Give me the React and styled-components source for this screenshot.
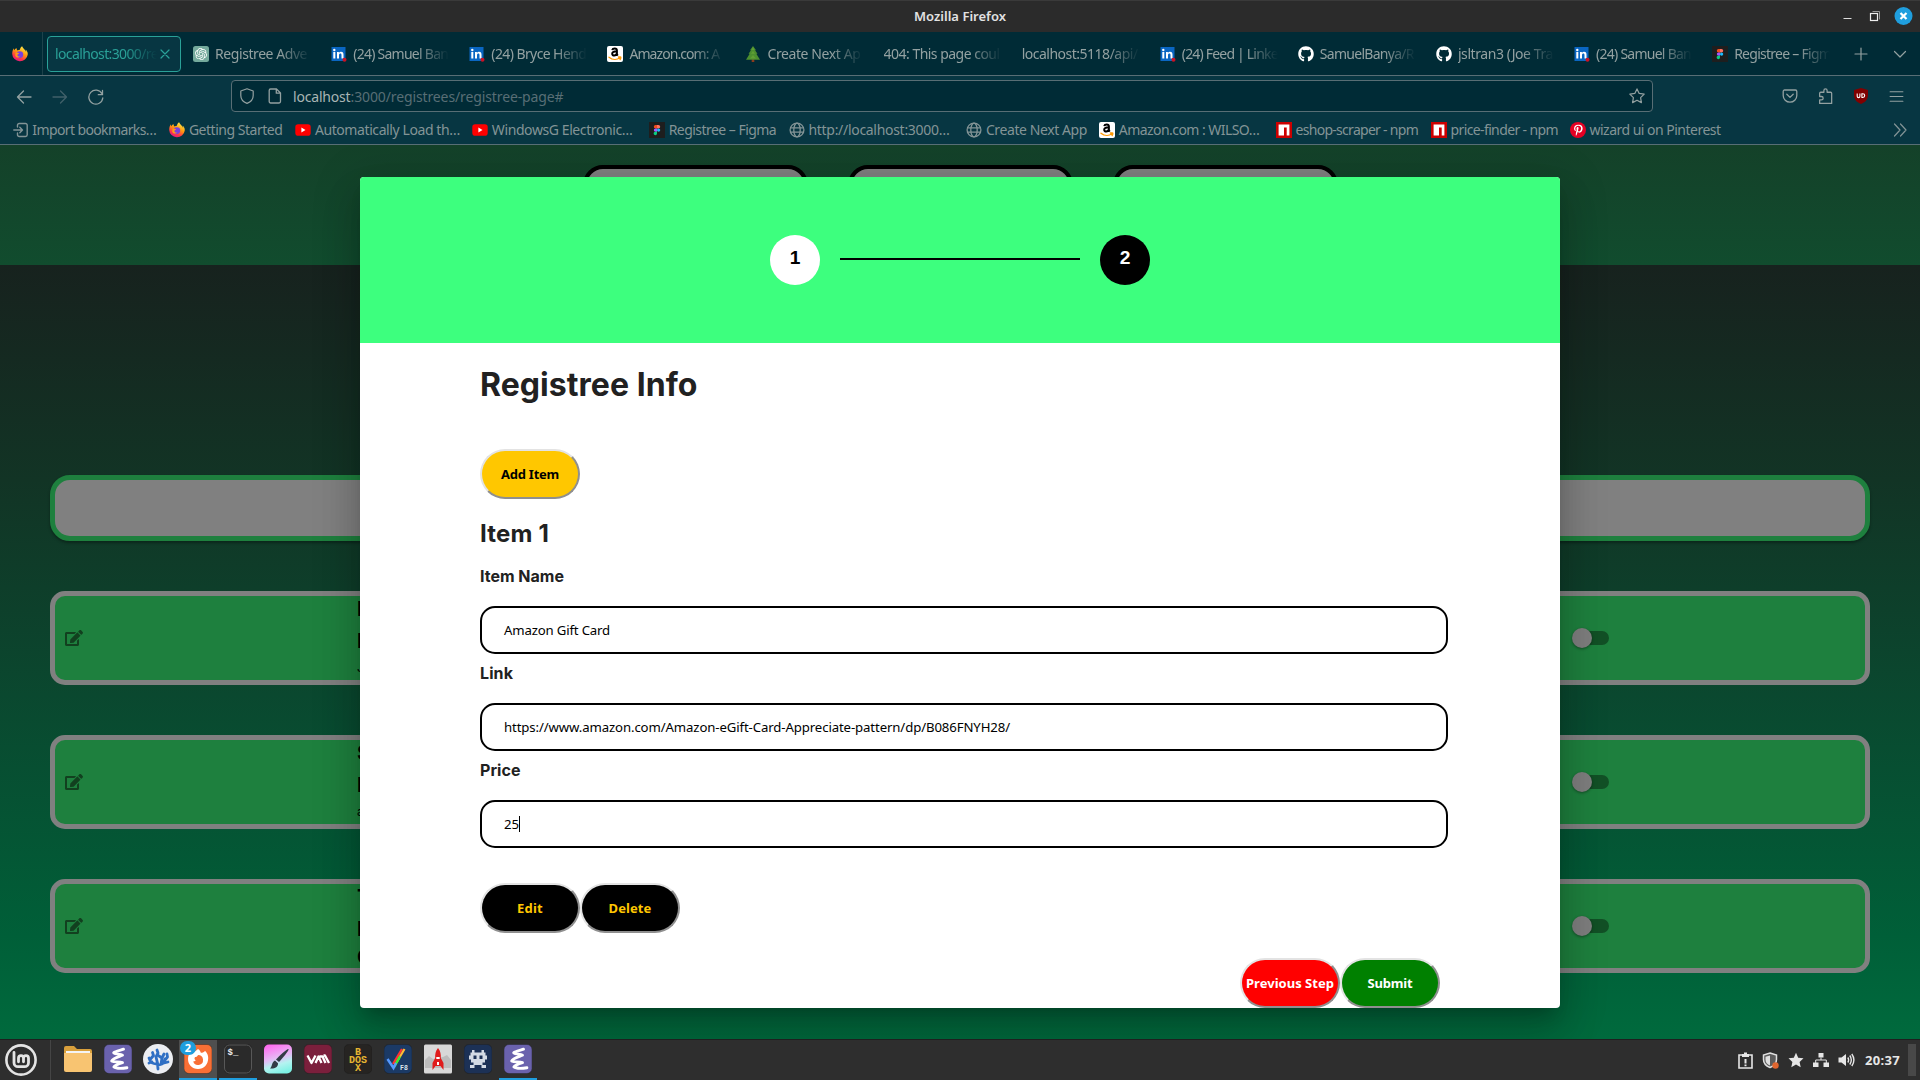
import React, { useLayoutEffect, useRef, useState } from "react";
import styled, { createGlobalStyle, css } from "styled-components";
import { FaEdit, FaGithub, FaPinterestP } from "react-icons/fa";
import { SiOpenai } from "react-icons/si";

const GlobalStyle = createGlobalStyle`
  * { box-sizing: border-box; }
  html, body { margin: 0; padding: 0; background: #002b36; overflow: hidden; }
  svg { display: block; flex: none; }
`;

const ui = `"Noto Sans", "Open Sans", sans-serif`;
const inter = `Inter, "Liberation Sans", sans-serif`;

const Desktop = styled.div`
  width: 1920px;
  height: 1080px;
  display: grid;
  grid-template-columns: 1920px;
  grid-template-rows: 32px 44px 42px 27px 894px 41px;
  overflow: hidden;
  font-family: ${ui};
  font-size: 14px;
  color: #93a1a1;
`;

/* ---------- text that keeps a given advance width ---------- */
const FitSpan = styled.span`
  display: block;
  flex: none;
  white-space: pre;
`;

function Fit({ w, children, className }) {
  const ref = useRef(null);
  const [spacing, setSpacing] = useState(0);
  useLayoutEffect(() => {
    const range = document.createRange();
    range.selectNodeContents(ref.current);
    const natural = range.getBoundingClientRect().width;
    setSpacing((w - natural) / String(children).length);
  }, [w, children]);
  return (
    <FitSpan ref={ref} className={className} style={{ letterSpacing: spacing, width: w }}>
      {children}
    </FitSpan>
  );
}

/* ---------- title bar ---------- */
const TitleBar = styled.header`
  display: grid;
  grid-template-columns: 1fr auto 1fr;
  align-items: center;
  background: #2b2b2b;
  border-top: 1px solid #3a3a3a;
  color: #e2e2e2;
  font-size: 13px;
  font-weight: 600;
  padding-bottom: 1px;
`;
const WindowButtons = styled.div`
  grid-column: 3;
  display: flex;
  justify-content: flex-end;
  align-items: center;
  padding-right: 7px;
`;
const TitleText = styled.div`
  grid-column: 2;
`;

/* ---------- tab strip ---------- */
const TabStrip = styled.nav`
  display: flex;
  align-items: center;
  background: #002b36;
  border-bottom: 1px solid #586e75;
`;
const PinnedTab = styled.div`
  width: 43px;
  height: 43px;
  padding-left: 12px;
  display: flex;
  align-items: center;
  border-right: 1px solid #1d424b;
  margin-right: 4px;
  flex: none;
`;
const Tab = styled.div`
  width: 134px;
  height: 36px;
  margin-right: 4.1px;
  padding: 0 7px;
  display: flex;
  align-items: center;
  gap: 6px;
  border: 1px solid transparent;
  border-radius: 4px;
  flex: none;
  ${(p) =>
    p.$active &&
    css`
      background: #073642;
      border-color: #2aa198;
      color: #2aa198;
      gap: 0;
    `}
`;
const TabLabel = styled.div`
  flex: 1;
  min-width: 0;
  mask-image: linear-gradient(to left, transparent, #000 32px);
`;
const StripButton = styled.div`
  width: ${(p) => p.$w}px;
  display: flex;
  justify-content: center;
`;

/* ---------- navigation bar ---------- */
const NavBar = styled.div`
  display: flex;
  align-items: center;
  background: #073642;
`;
const NavGroup = styled.div`
  width: 231px;
  display: flex;
  gap: 20px;
  padding-left: 16px;
`;
const UrlBar = styled.div`
  width: 1422px;
  height: 32px;
  margin-bottom: 2px;
  display: flex;
  align-items: center;
  background: #002b36;
  border: 1px solid #586e75;
  border-radius: 4px;
  padding: 0 7px;
  gap: 12px;
`;
const UrlText = styled.div`
  display: flex;
  flex: 1;
  margin-left: -2px;
`;
const Host = styled(Fit)`
  color: #a9b5b4;
`;
const Path = styled(Fit)`
  color: #586e75;
`;
const NavTools = styled.div`
  flex: 1;
  display: flex;
  align-items: center;
  justify-content: flex-end;
  gap: 18.8px;
  padding-right: 15.5px;
  padding-bottom: 2px;
`;

/* ---------- bookmarks ---------- */
const BookmarkBar = styled.div`
  display: flex;
  align-items: center;
  background: #073642;
  border-bottom: 1px solid #586e75;
  padding: 0 12px 3px 12.5px;
  color: #839496;
`;
const Bookmark = styled.div`
  display: flex;
  align-items: center;
  gap: 3.8px;
  margin-right: ${(p) => p.$gap}px;
`;
const BookmarkMore = styled.div`
  margin-left: auto;
`;

/* ---------- page behind the dialog ---------- */
const Page = styled.main`
  position: relative;
  overflow: hidden;
  background: linear-gradient(#17221e 120px, #123425 335px, #0a482f 550px, #005f38 790px, #006a3d 894px);
`;
const Hero = styled.section`
  height: 120px;
  padding-top: 20px;
  display: flex;
  justify-content: center;
  gap: 40px;
  overflow: hidden;
  background: linear-gradient(#144129, #114c2e);
`;
const HeroCard = styled.div`
  width: 225px;
  height: 90px;
  border: 4px solid #000;
  border-radius: 20px;
  background: #808080;
`;
const List = styled.section`
  display: flex;
  flex-direction: column;
  padding: 210px 50px 0;
`;
const SearchBox = styled.div`
  height: 66px;
  border: 5px solid #1e803e;
  border-radius: 20px;
  background: #808080;
  box-shadow: 0 2px 3px rgba(0, 0, 0, 0.35);
  margin-bottom: 50px;
`;
const Row = styled.div`
  height: 94px;
  margin-bottom: 50px;
  border: 5px solid #808080;
  border-radius: 15px;
  background: #1e803e;
  display: grid;
  grid-template-columns: 302px 1218px 1fr;
  grid-template-rows: 84px;
  align-items: center;
  color: #12401f;
`;
const RowIcon = styled.div`
  padding-left: 10px;
`;
const RowInfo = styled.div`
  align-self: start;
  display: flex;
  flex-direction: column;
  color: #000;
  font: 700 20px/32px ${inter};
  margin-top: -3px;
`;
const RowNote = styled.span`
  font: ${(p) => (p.$bold ? "700 20px/24px" : "400 12px/22px")} ${inter};
`;
const Track = styled.div`
  width: 34px;
  height: 14px;
  border-radius: 7px;
  background: #125026;
  display: flex;
  align-items: center;
`;
const Thumb = styled.div`
  width: 20px;
  height: 20px;
  margin-left: -3px;
  border-radius: 50%;
  background: #7e7e7e;
  flex: none;
  box-shadow: 0 1px 3px rgba(0, 0, 0, 0.4);
`;

/* ---------- dialog ---------- */
const Dialog = styled.section`
  position: absolute;
  left: 360px;
  top: 32px;
  width: 1200px;
  height: 831px;
  border-radius: 4px;
  overflow: hidden;
  background: #fff;
  box-shadow: 0 11px 15px -7px rgba(0, 0, 0, 0.2), 0 24px 38px 3px rgba(0, 0, 0, 0.14), 0 9px 46px 8px rgba(0, 0, 0, 0.12);
  color: #212121;
  font-family: ${inter};
`;
const Stepper = styled.div`
  height: 166px;
  background: #3dff7e;
  display: flex;
  align-items: center;
  justify-content: center;
  gap: 20px;
`;
const Step = styled.div`
  width: 50px;
  height: 50px;
  border-radius: 50%;
  background: ${(p) => (p.$dark ? "#000" : "#fff")};
  color: ${(p) => (p.$dark ? "#fff" : "#000")};
  font: 700 19.2px/46px "Liberation Sans", Arial, sans-serif;
  text-align: center;
`;
const StepLine = styled.div`
  width: 240px;
  height: 2px;
  margin-bottom: 2px;
  background: #000;
`;
const Form = styled.div`
  width: 960px;
  margin: 0 auto;
`;
const Title = styled(Fit)`
  font-weight: 700;
  font-size: 32px;
  line-height: 40px;
  padding-top: 22px;
  height: 106px;
`;
const ItemTitle = styled(Fit)`
  font-weight: 700;
  font-size: 24px;
  line-height: 30px;
  margin-top: 20px;
`;
const Label = styled(Fit)`
  font-weight: 700;
  font-size: 16px;
  line-height: 20px;
  margin: ${(p) => p.$top || 9}px 0 20px;
`;
const ItemLabel = styled(Label)`
  margin-top: 17px;
`;
const Field = styled.div`
  width: 968px;
  height: 48px;
  border: 2px solid #000;
  border-radius: 15px;
  padding-left: 22px;
  margin-bottom: 9px;
  display: flex;
  align-items: center;
  font: 400 13.2px ${ui};
  color: #000;
`;
const Caret = styled.span`
  width: 1px;
  height: 16px;
  background: #000;
`;
const Button = styled.button`
  width: 100px;
  height: 50px;
  padding: 0;
  border: 2px solid;
  border-color: #e3e3e3 #8f8f8f #8f8f8f #e3e3e3;
  border-radius: 25px;
  background: ${(p) => p.$bg};
  color: ${(p) => p.$fg};
  font: 700 13px ${ui};
  display: flex;
  align-items: center;
  justify-content: center;
`;
const ButtonRow = styled.div`
  display: flex;
  margin-top: ${(p) => p.$top}px;
  justify-content: ${(p) => (p.$end ? "flex-end" : "flex-start")};
`;

/* ---------- taskbar ---------- */
const Taskbar = styled.footer`
  display: flex;
  align-items: stretch;
  background: #2e2e2e;
  border-top: 1px solid #1f1f1f;
`;
const MenuButton = styled.div`
  width: 51px;
  padding-left: 4px;
  display: flex;
  align-items: center;
  border-right: 1px solid #454545;
  margin-right: 8px;
`;
const Task = styled.div`
  position: relative;
  width: 38px;
  margin-right: 2px;
  display: flex;
  align-items: center;
  justify-content: center;
  background: ${(p) => (p.$active ? "#4f4f4f" : "transparent")};
  border-bottom: 2px solid ${(p) => (p.$open ? "#1f9ede" : "transparent")};
`;
const Badge = styled.span`
  position: absolute;
  left: 1px;
  top: 1px;
  width: 16px;
  height: 14px;
  border-radius: 7px;
  background: #1f9ede;
  color: #fff;
  font: 700 11px/14px ${ui};
  text-align: center;
`;
const Tray = styled.div`
  margin-left: auto;
  display: flex;
  align-items: center;
  gap: 9px;
  padding-right: 4px;
  color: #e6e6e6;
`;
const Clock = styled.div`
  font: 700 13px ${ui};
  color: #e6e6e6;
  margin-left: 1px;
`;
const ShowDesktop = styled.div`
  width: 8px;
  height: 32px;
  background: #484848;
  margin-left: -1px;
`;

/* ---------- icons ---------- */
const line = { fill: "none", stroke: "currentColor", strokeWidth: 1.3, strokeLinecap: "round", strokeLinejoin: "round" };

const FirefoxIcon = () => (
  <svg width="16" height="16" viewBox="0 0 16 16">
    <defs>
      <linearGradient id="ffx" x1="0.8" y1="0" x2="0.3" y2="1">
        <stop offset="0" stopColor="#fff44f" />
        <stop offset="0.45" stopColor="#ff980e" />
        <stop offset="0.75" stopColor="#ff3647" />
        <stop offset="1" stopColor="#e31587" />
      </linearGradient>
    </defs>
    <path fill="url(#ffx)" d="M15.5 6.2c-.4-1-1.200-2.100-1.900-2.400.4.9.6 1.600.6 2.100C13 3.600 11 2.600 10.100.3 8.600 1.200 8 2.800 7.900 3.800c-.9 0-1.700.3-2.300.7C4.500 3.600 4.500 2.500 4.600 2.100 3.500 2.600 2.700 3.500 2.200 4.200 1.900 3.800 1.900 2.600 1.900 2.300 1 3.100.2 5.500.2 8a7.800 7.800 0 0 0 15.500.7c.1-.9.100-1.700-.2-2.500z" />
    <circle cx="7.800" cy="8.600" r="3.400" fill="#7a3fe0" />
    <path fill="#ff9a1a" d="M3.600 6.700c1.300-.5 2.600 0 3.500.9-.6.9-1.700.5-1.700 1.500 0 1.300 1.600 1.900 3 1.500-1.200 1.600-4.500 1.300-5.200-1.200z" />
  </svg>
);
const ChatIcon = () => (
  <svg width="16" height="16" viewBox="0 0 16 16">
    <rect width="16" height="16" rx="2.500" fill="#74aa9c" />
    <g transform="translate(2 2)" color="#fff"><SiOpenai size={12} /></g>
  </svg>
);
const LinkedInIcon = () => (
  <svg width="16" height="16" viewBox="0 0 16 16">
    <rect x="0.500" y="1" width="14" height="14" fill="#0a66c2" />
    <g fill="#fff"><rect x="2.300" y="6" width="2" height="6.500" /><circle cx="3.300" cy="4" r="1.200" />
      <path d="M6 6h1.900v.9c.4-.7 1.100-1.100 2.100-1.100 1.900 0 2.500 1.200 2.500 3v3.700h-2V9.200c0-1-.2-1.700-1.100-1.700s-1.400.7-1.400 1.700v3.300H6z" /></g>
    <circle cx="13.500" cy="13.700" r="2" fill="#cb1124" />
  </svg>
);
const AmazonIcon = () => (
  <svg width="16" height="16" viewBox="0 0 16 16">
    <rect width="16" height="16" rx="2" fill="#fff" />
    <path fill="none" stroke="#000" strokeWidth="2" d="M5.200 4.100c.3-1.300 1.100-1.700 2.500-1.700 1.600 0 2.200.7 2.200 2v3.300c0 .9.300 1.300.9 1.900M9.900 5.300c-2.900 0-4.700.6-4.700 2.500 0 2.400 3.900 2.100 4.700-.6" />
    <path fill="none" stroke="#f90" strokeWidth="1.400" strokeLinecap="round" d="M2 11.200c3.500 2.800 8 2.800 11 .6M11.600 11c1.300-.4 2.300 0 2.200.3.100.6-.2 1.500-.7 2.200" />
  </svg>
);
const TreeIcon = () => (
  <svg width="16" height="16" viewBox="0 0 16 16">
    <rect x="6.700" y="12.500" width="2.600" height="3.500" fill="#8a3b1d" />
    <path fill="#4c8f2f" d="M8 0l3 4.200h-1l2.500 3.600h-1.200L15 13.700H1l3.700-5.900H3.500L6 4.200H5z" />
    <path fill="#75b23c" d="M8 1l1.500 3h-3zM8 5l2 2.800H6zM8 9l3 3.500H5z" opacity=".5" />
  </svg>
);
const GithubIcon = () => <FaGithub size={16} color="#fff" />;
const FigmaIcon = () => (
  <svg width="16" height="16" viewBox="0 0 16 16">
    <rect width="16" height="16" fill="#1e1e1e" />
    <path fill="#f24e1e" d="M8 3H6.500a1.700 1.700 0 0 0 0 3.400H8z" />
    <path fill="#ff7262" d="M8 3h1.500a1.700 1.700 0 0 1 0 3.400H8z" />
    <path fill="#a259ff" d="M8 6.400H6.500a1.700 1.700 0 0 0 0 3.400H8z" />
    <circle cx="9.600" cy="8.100" r="1.650" fill="#1abcfe" />
    <path fill="#0acf83" d="M8 9.800H6.500A1.700 1.700 0 1 0 8 11.500z" />
  </svg>
);
const YoutubeIcon = () => (
  <svg width="16" height="16" viewBox="0 0 16 16">
    <rect x="0.300" y="2.300" width="15.400" height="11.400" rx="2.800" fill="#f00" />
    <path fill="#fff" d="M6.400 5.600v4.800L10.500 8z" />
  </svg>
);
const GlobeIcon = () => (
  <svg width="16" height="16" viewBox="0 0 16 16" {...line}>
    <circle cx="8" cy="8" r="6.900" /><ellipse cx="8" cy="8" rx="3.200" ry="6.900" /><path d="M1.500 5.800h13M1.500 10.200h13" />
  </svg>
);
const NpmIcon = () => (
  <svg width="16" height="16" viewBox="0 0 16 16">
    <rect width="16" height="16" fill="#c00" /><path fill="#fff" d="M2.600 2.600h10.800v10.800h-2.700V5.400H8v8H2.600z" />
  </svg>
);
const PinterestIcon = () => (
  <svg width="16" height="16" viewBox="0 0 16 16">
    <circle cx="8" cy="8" r="8" fill="#e60023" /><g transform="translate(2.600 2.400)"><FaPinterestP size={11.500} color="#fff" /></g>
  </svg>
);
const ImportIcon = () => (
  <svg width="16" height="16" viewBox="0 0 16 16" {...line} strokeWidth="1.400">
    <path d="M4.500 5V3.200A1.700 1.700 0 0 1 6.200 1.500h6.300a1.700 1.700 0 0 1 1.700 1.700v9.600a1.700 1.700 0 0 1-1.700 1.700H6.200a1.700 1.700 0 0 1-1.700-1.700V11M.8 8h8.500M6.800 5.300L9.500 8l-2.700 2.700" />
  </svg>
);
const Glyph = ({ d, size = 16, w = 1.3, color }) => (
  <svg width={size} height={size} viewBox="0 0 16 16" {...line} strokeWidth={w} color={color}>
    <path d={d} />
  </svg>
);

/* ---------- taskbar drawings ---------- */
const Tile = ({ fill, children }) => (
  <svg width="28" height="30" viewBox="0 0 28 30">
    <rect x="0" y="0.500" width="28" height="29" rx="5" fill={fill} stroke="#1c1c1c" strokeOpacity=".4" />
    {children}
  </svg>
);
const MintIcon = () => (
  <svg width="34" height="34" viewBox="0 0 34 34" fill="none" stroke="#e4e4e4">
    <circle cx="17" cy="17" r="14.600" strokeWidth="2.600" />
    <path strokeWidth="2.800" strokeLinecap="round" d="M10 9.500v10.200a4 4 0 0 0 4 4h6.500a4 4 0 0 0 4-4v-4.500a2.500 2.500 0 0 0-5 0v3.600M19.500 18.800v-3.600a2.500 2.500 0 0 0-5 0v3.600" />
  </svg>
);
const FolderIcon = () => (
  <svg width="28" height="28" viewBox="0 0 28 28">
    <path fill="#d9a03c" d="M0 3a2 2 0 0 1 2-2h8l3 3h13a2 2 0 0 1 2 2v5H0z" />
    <rect x="2" y="6" width="24" height="6" fill="#f4f4f4" />
    <path fill="#f8c471" d="M0 8h28v17a2 2 0 0 1-2 2H2a2 2 0 0 1-2-2z" />
  </svg>
);
const EmacsIcon = () => (
  <Tile fill="#6a62ad">
    <path fill="none" stroke="#fff" strokeWidth="2.900" strokeLinecap="round" strokeLinejoin="round" d="M19.500 5.200c-3.500 1.300-8 1.800-9.800 3.600 2 1.700 6.500 1 8.800 2.400-4 1.500-10 3-10.800 5.800 2.500 1.500 7.500.3 10.800 1.600-3.500 1-7.500 2.200-8.600 4.300 2.500 2.100 8 1.600 13 .9" />
  </Tile>
);
const CoralIcon = () => (
  <svg width="30" height="32" viewBox="0 0 30 32">
    <circle cx="15" cy="16" r="15" fill="#eceef2" />
    <g fill="none" stroke="#2f6fc4" strokeWidth="2.800" strokeLinecap="round" strokeLinejoin="round">
      <path d="M15 26c0-5-1-9-2-12M14 21c-4 0-7-2-8-6M9 19l-3 1M7.500 16l3-3.500-1-3M13 14l2-4-1-3M15 22c4 0 6-2 7-6M18 21l1-6 2-4M22 17l2.500-3-.5-3M19 15l-3-2M21 20l4-1" />
    </g>
  </svg>
);
const FirefoxTask = () => (
  <Tile fill="#f96f35">
    <path fill="#fff" d="M14 5c1.700 1 2.500 2.300 2.800 3.800 2 0 3.400-.6 4.200-2 2.300 2.500 3.200 4.700 3.200 7.200C24.200 20.500 20 25 14 25S4 20.500 4 15c0-3 1-5.500 3-7 .2 1.200.7 1.800 1.500 2.200C9.500 7.500 11.500 7.500 14 5z" />
    <path fill="#f96f35" d="M14 11a5 5 0 1 1-4.800 6.300c1 .3 2-.2 2.500-1-1.500-.8-1.500-2.300-.5-3.300.9.200 2-.3 2.800-2z" />
  </Tile>
);
const TerminalIcon = () => (
  <Tile fill="#2a2a2a">
    <rect x="0.500" y="1" width="27" height="28" rx="5" fill="none" stroke="#585858" />
    <text x="3.500" y="11" fontFamily="Liberation Mono, monospace" fontWeight="700" fontSize="9" fill="#eee">$_</text>
  </Tile>
);
const KritaIcon = () => (
  <svg width="28" height="30" viewBox="0 0 28 30">
    <defs><linearGradient id="kr" x1="0.300" y1="0" x2="0.600" y2="1"><stop offset="0" stopColor="#ff6cf0" /><stop offset=".45" stopColor="#e6b8f5" /><stop offset=".7" stopColor="#b4f3f0" /><stop offset="1" stopColor="#7df2e4" /></linearGradient></defs>
    <rect y="0.500" width="28" height="29" rx="5" fill="url(#kr)" />
    <path fill="#333b46" d="M24.500 5c1 .8-6 9.500-9.500 13l-3-2.500C15 12 23.500 4.200 24.500 5zM11 16.500l3 2.700c.3 4-3.500 5.800-8 5.300 2.300-1.500 1.500-6.500 5-8z" />
  </svg>
);
const VmIcon = () => (
  <Tile fill="#7b1f3c"><path fill="none" stroke="#fff" strokeWidth="2.300" strokeLinejoin="round" d="M3.500 11.500l4 7.500 4-7.500M11.500 19l3-6.500L17.500 19M15.500 12.500h3L21.500 19M19.500 11.500h1.500l4 7.500" /></Tile>
);
const DosIcon = () => (
  <Tile fill="#262422">
    <g fontFamily="Liberation Mono, monospace" fontWeight="700" fontSize="10" fill="#e6b631" textAnchor="middle">
      <text x="14" y="10.500">B</text><text x="14" y="18.500">DOS</text><text x="14" y="26.500">X</text>
    </g>
  </Tile>
);
const F8Icon = () => (
  <Tile fill="#1b3a66">
    <path stroke="#f33" strokeWidth="2.200" fill="none" d="M9 20L18 5" /><path stroke="#fb3" strokeWidth="2.200" fill="none" d="M11 21L20.500 5" />
    <path stroke="#3e3" strokeWidth="2.200" fill="none" d="M10 23.500L16 12.500" /><path stroke="#59f" strokeWidth="2.500" fill="none" d="M3.500 15l6 9L12 19" />
    <text x="16" y="26" fontFamily="Liberation Mono, monospace" fontWeight="700" fontSize="6.500" fill="#dfe6ee">F8</text>
  </Tile>
);
const RocketIcon = () => (
  <svg width="28" height="30" viewBox="0 0 28 30">
    <rect y="0.500" width="28" height="29" rx="1.500" fill="#d8d8d8" />
    <path fill="#bcbcbc" d="M1 16l4-4 4 3 10-2 4-2 4 5v8H1z" />
    <path fill="#e01b1b" d="M14 4c2.500 3 3 6 2.800 10l2.700 5v7l-3-4h-5l-3 4v-7l2.700-5C11 10 11.500 7 14 4z" />
    <path fill="#fff" d="M12.300 13h3.400v2h-3.400zM13 18h2v3h-2z" />
  </svg>
);
const InvaderIcon = () => (
  <Tile fill="#1c3156"><path fill="#d3dae4" d="M8 6h2.500v2.500h7V6H20v2.500h1.500v3H23v4h-2v3h-2.500v2.500H22V24h-4.500v-3h-7v3H6v-3h3.500v-2.500H7v-3H5v-4h1.500v-3H8zM9.500 11.500V15h3v-3.500zM15.500 11.500V15h3v-3.500z" fillRule="evenodd" /></Tile>
);

/* ---------- data ---------- */
const tabs = [
  { icon: ChatIcon, text: "Registree Adve", w: 92 },
  { icon: LinkedInIcon, text: "(24) Samuel Ban", w: 95 },
  { icon: LinkedInIcon, text: "(24) Bryce Hend", w: 95 },
  { icon: AmazonIcon, text: "Amazon.com: A", w: 90 },
  { icon: TreeIcon, text: "Create Next Ap", w: 93 },
  { text: "404: This page coul", w: 116 },
  { text: "localhost:5118/api/", w: 116 },
  { icon: LinkedInIcon, text: "(24) Feed | Linke", w: 96 },
  { icon: GithubIcon, text: "SamuelBanya/R", w: 94 },
  { icon: GithubIcon, text: "jsltran3 (Joe Tra", w: 95 },
  { icon: LinkedInIcon, text: "(24) Samuel Ban", w: 95 },
  { icon: FigmaIcon, text: "Registree – Figm", w: 97 },
];
const bookmarks = [
  { icon: ImportIcon, text: "Import bookmarks…", w: 124, gap: 12.8 },
  { icon: FirefoxIcon, text: "Getting Started", w: 93.5, gap: 12.7 },
  { icon: YoutubeIcon, text: "Automatically Load th…", w: 145, gap: 12.2 },
  { icon: YoutubeIcon, text: "WindowsG Electronic…", w: 140.5, gap: 16.5 },
  { icon: FigmaIcon, text: "Registree – Figma", w: 107.5, gap: 12.5 },
  { icon: GlobeIcon, text: "http://localhost:3000…", w: 141, gap: 16.7 },
  { icon: GlobeIcon, text: "Create Next App", w: 101, gap: 12 },
  { icon: AmazonIcon, text: "Amazon.com : WILSO…", w: 140.5, gap: 16.5 },
  { icon: NpmIcon, text: "eshop-scraper - npm", w: 122.5, gap: 12.7 },
  { icon: NpmIcon, text: "price-finder - npm", w: 107.5, gap: 11.7 },
  { icon: PinterestIcon, text: "wizard ui on Pinterest", w: 131, gap: 0 },
];
const rows = [
  { lines: ["D", "L"], note: "J" },
  { lines: ["S", "L"], note: "a" },
  { lines: ["T", "L"], note: "C", bold: true },
];
const tasks = [
  { icon: FolderIcon }, { icon: EmacsIcon }, { icon: CoralIcon },
  { icon: FirefoxTask, active: true, open: true, badge: "2" },
  { icon: TerminalIcon, open: true }, { icon: KritaIcon }, { icon: VmIcon }, { icon: DosIcon },
  { icon: F8Icon }, { icon: RocketIcon }, { icon: InvaderIcon }, { icon: EmacsIcon, open: true },
];

export default function App() {
  return (
    <>
      <GlobalStyle />
      <Desktop>
        <TitleBar>
          <TitleText><Fit w={92}>Mozilla Firefox</Fit></TitleText>
          <WindowButtons>
            <svg width="70" height="20" viewBox="0 0 70 20">
              <path d="M0.500 12.500h8" stroke="#ddd" strokeWidth="1" fill="none" />
              <path d="M29.500 5.500h7v8" stroke="#999" fill="none" />
              <rect x="27.500" y="7.500" width="7" height="7" stroke="#eee" strokeWidth="1.200" fill="none" />
              <circle cx="60.500" cy="10" r="9" fill="#1f9ede" />
              <path d="M57.500 7l6 6M63.500 7l-6 6" stroke="#fff" strokeWidth="2.200" fill="none" />
            </svg>
          </WindowButtons>
        </TitleBar>

        <TabStrip>
          <PinnedTab><FirefoxIcon /></PinnedTab>
          <Tab $active>
            <TabLabel><Fit w={103}>localhost:3000/re</Fit></TabLabel>
            <Glyph d="M4 4l8 8M12 4l-8 8" w={1.2} />
          </Tab>
          {tabs.map(({ icon: Icon, text, w }, i) => (
            <Tab key={i}>
              {Icon && <Icon />}
              <TabLabel><Fit w={w}>{text}</Fit></TabLabel>
            </Tab>
          ))}
          <StripButton $w={38}><Glyph d="M8 2v12M2 8h12" w={1.2} /></StripButton>
          <StripButton $w={42}><Glyph d="M2.500 5.500L8 11l5.500-5.500" w={1.2} /></StripButton>
        </TabStrip>

        <NavBar>
          <NavGroup>
            <Glyph d="M15 8H1.500M7.500 2L1.500 8l6 6" />
            <Glyph d="M1 8h13.500M8.500 2l6 6-6 6" color="#41606a" />
            <Glyph d="M14 4.800A7 7 0 1 0 14.800 9M14.500 1.500v4.200h-4.200" />
          </NavGroup>
          <UrlBar>
            <Glyph d="M8 .8L14.200 3v4.500c0 3.800-2.600 6.500-6.200 7.900C4.400 14 1.800 11.300 1.800 7.500V3z" w={1.2} />
            <Glyph w={1.3} d="M3.600 1h5.900l4 4v8.600A1.400 1.400 0 0 1 12.100 15H3.600a1.400 1.400 0 0 1-1.400-1.400V2.400A1.400 1.400 0 0 1 3.600 1zM9.300 1.200v4h4" />
            <UrlText><Host w={57.5}>localhost</Host><Path w={213}>:3000/registrees/registree-page#</Path></UrlText>
            <Glyph w={1.2} d="M8 .9l2.200 4.500 5 .7-3.600 3.500.8 5L8 12.200l-4.400 2.400.8-5L.8 6.100l5-.7z" />
          </UrlBar>
          <NavTools>
            <Glyph d="M2.600 2h10.800A1.400 1.400 0 0 1 14.800 3.400v4a6.800 6.800 0 0 1-13.600 0v-4A1.400 1.400 0 0 1 2.600 2zM4.800 6.300L8 9.400l3.200-3.100" />
            <Glyph d="M2.500 5.800V5A1 1 0 0 1 3.500 4H6.500V2.300a1.500 1.500 0 0 1 3 0V4h3.300a1 1 0 0 1 1 1v9.500h-11.300V11.200H4.200a1.500 1.500 0 0 0 0-3.200H2.500z" size={17} w={1.2} />
            <svg width="16" height="16" viewBox="0 0 16 16">
              <path fill="#800000" d="M8 0l7 2v5c0 4.500-3 7.500-7 9-4-1.500-7-4.500-7-9V2z" />
              <path fill="none" stroke="#fff" strokeWidth="1.100" d="M4.200 5.500v2.800a1.300 1.300 0 0 0 2.700 0V5.500M8.900 5.700v3.800h.9a1.900 1.900 0 0 0 0-3.800z" />
            </svg>
            <Glyph d="M2 3.500h12M2 8h12M2 12.500h12" size={17} w={1.1} />
          </NavTools>
        </NavBar>

        <BookmarkBar>
          {bookmarks.map(({ icon: Icon, text, w, gap }, i) => (
            <Bookmark key={i} $gap={gap}><Icon /><Fit w={w}>{text}</Fit></Bookmark>
          ))}
          <BookmarkMore><Glyph d="M2.500 2l5.500 6-5.500 6M8.500 2L14 8l-5.500 6" w={1.2} /></BookmarkMore>
        </BookmarkBar>

        <Page>
          <Hero><HeroCard /><HeroCard /><HeroCard /></Hero>
          <List>
            <SearchBox />
            {rows.map((r, i) => (
              <Row key={i}>
                <RowIcon><FaEdit size={18} /></RowIcon>
                <RowInfo>
                  {r.lines.map((l, j) => <span key={j}>{l}</span>)}
                  <RowNote $bold={r.bold}>{r.note}</RowNote>
                </RowInfo>
                <Track><Thumb /></Track>
              </Row>
            ))}
          </List>

          <Dialog>
            <Stepper>
              <Step>1</Step>
              <StepLine />
              <Step $dark>2</Step>
            </Stepper>
            <Form>
              <Title w={217.5}>Registree Info</Title>
              <Button $bg="#ffc700" $fg="#000"><Fit w={58}>Add Item</Fit></Button>
              <ItemTitle w={69}>Item 1</ItemTitle>
              <ItemLabel w={84}>Item Name</ItemLabel>
              <Field><Fit w={106}>Amazon Gift Card</Fit></Field>
              <Label w={33}>Link</Label>
              <Field><Fit w={506}>https://www.amazon.com/Amazon-eGift-Card-Appreciate-pattern/dp/B086FNYH28/</Fit></Field>
              <Label w={40.5}>Price</Label>
              <Field><Fit w={15}>25</Fit><Caret /></Field>
              <ButtonRow $top={35}>
                <Button $bg="#000" $fg="#ffc700"><Fit w={26}>Edit</Fit></Button>
                <Button $bg="#000" $fg="#ffc700"><Fit w={43}>Delete</Fit></Button>
              </ButtonRow>
              <ButtonRow $top={25} $end>
                <Button $bg="#ff0000" $fg="#fff"><Fit w={88}>Previous Step</Fit></Button>
                <Button $bg="#008000" $fg="#fff"><Fit w={45}>Submit</Fit></Button>
              </ButtonRow>
            </Form>
          </Dialog>
        </Page>

        <Taskbar>
          <MenuButton><MintIcon /></MenuButton>
          {tasks.map(({ icon: Icon, active, open, badge }, i) => (
            <Task key={i} $active={active} $open={open}>
              <Icon />
              {badge && <Badge>{badge}</Badge>}
            </Task>
          ))}
          <Tray>
            <svg width="15" height="17" viewBox="0 0 15 17"><path d="M1 3h13v13H1z" fill="none" stroke="currentColor" strokeWidth="1.600" /><path fill="currentColor" d="M4 2h2V.5h3V2h2v3H4zM6.500 7h2v4.500h-2zM6.500 12.500h2v1.700h-2z" /></svg>
            <svg width="17" height="17" viewBox="0 0 17 17"><path d="M8 1l6.500 2v4.500c0 3.800-2.600 6.500-6.500 8-3.900-1.500-6.500-4.200-6.500-8V3z" fill="#5c5c5c" stroke="#e0e0e0" strokeWidth="1.500" /><path fill="#e0e0e0" d="M8 3.500l-4.500 1.200v3C3.500 10.500 5 12.200 8 13.500z" /><circle cx="13.500" cy="13.500" r="3.200" fill="#e0662f" /></svg>
            <svg width="16" height="16" viewBox="0 0 16 16"><path fill="currentColor" d="M8 .8l2.200 4.900 5.300.6-3.900 3.600 1.100 5.300L8 12.500l-4.700 2.700 1.100-5.300L.5 6.300l5.300-.6z" /></svg>
            <svg width="16" height="16" viewBox="0 0 16 16"><path fill="currentColor" d="M5.500 1h5v4.500h-5zM0 10.500h5.500V15H0zM10.500 10.500H16V15h-5.500z" /><path fill="none" stroke="currentColor" d="M8 5.500V8M2.700 11V8h10.600v3" /></svg>
            <svg width="17" height="16" viewBox="0 0 17 16"><path fill="currentColor" d="M0.500 5.500h3L8 2v12l-4.500-3.500h-3z" /><path fill="none" stroke="currentColor" strokeWidth="1.400" d="M9.800 5.500q1.600 2.500 0 5M11.800 3.500q3 4.500 0 9M13.800 2q4.200 6 0 12" /></svg>
            <Clock><Fit w={35}>20:37</Fit></Clock>
            <ShowDesktop />
          </Tray>
        </Taskbar>
      </Desktop>
    </>
  );
}
